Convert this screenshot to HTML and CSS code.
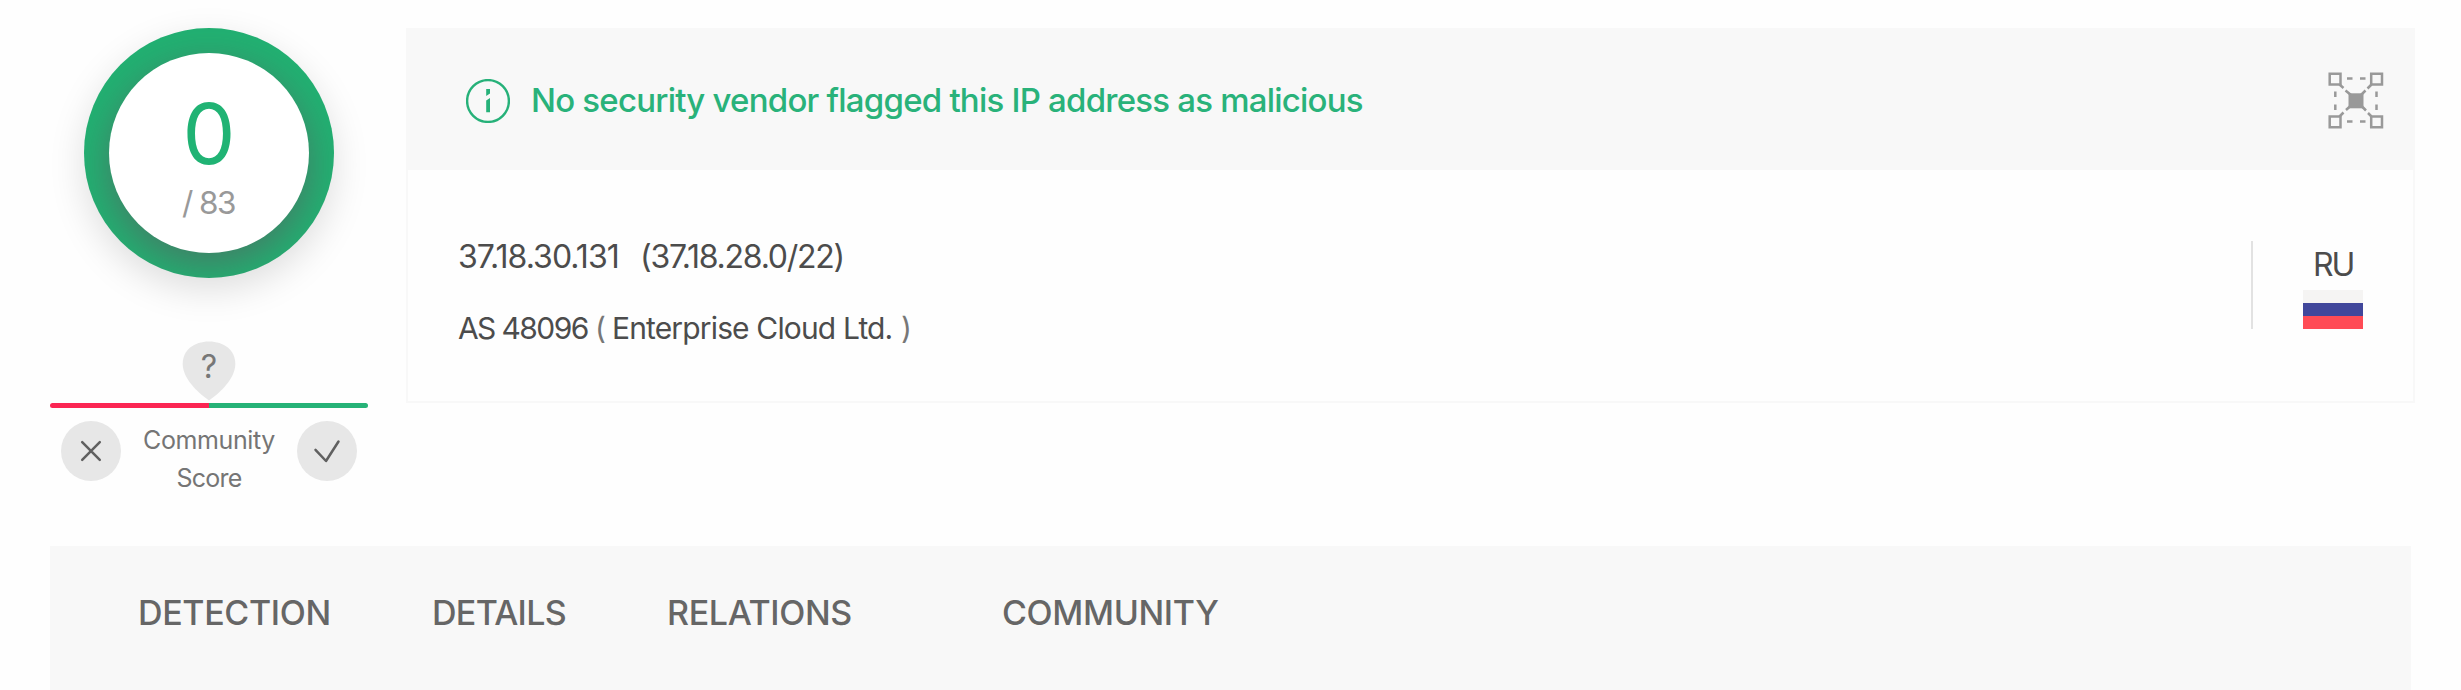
FILE: index.html
```html
<!DOCTYPE html>
<html lang="en">
<head>
<meta charset="utf-8">
<title>37.18.30.131</title>
<link rel="stylesheet" href="styles.css">
</head>
<body>
<div class="report">
  <div class="summary">
    <aside class="score">
      <div class="ring">
        <div class="dial">
          <span class="positives">0</span>
          <span class="total">/ 83</span>
        </div>
      </div>
      <div class="pin">
        <svg class="pin-shape" width="54" height="60" viewBox="0 0 54 60"><path d="M27 59.500C15 51 .700 37 .700 23C.700 9 12 .500 27 .500S53.300 9 53.300 23C53.300 37 39 51 27 59.500Z" fill="#e7e7e7"/></svg>
        <span class="pin-label">?</span>
      </div>
      <div class="bar"><div class="bar-bad"></div><div class="bar-good"></div></div>
      <div class="votes">
        <button class="vote"><svg width="60" height="60" viewBox="0 0 60 60"><path d="M21.200 21.200 38.800 38.800M38.800 21.200 21.200 38.800"/></svg></button>
        <div class="votes-label"><span class="community">Community</span><span class="word">Score</span></div>
        <button class="vote"><svg width="60" height="60" viewBox="0 0 60 60"><path d="M18.500 28.800 29 40 41.500 20.500"/></svg></button>
      </div>
    </aside>
    <section class="card">
      <header class="card-head">
        <svg class="info" width="44" height="44" viewBox="0 0 44 44"><circle cx="22" cy="22" r="20.900" fill="none" stroke="#26b179" stroke-width="2.400"/><path d="M20.200 10H24V14.500L20.200 17ZM20.200 21.500 24 19V33.200H20.200Z" fill="#26b179"/></svg>
        <h1 class="title">No security vendor flagged this IP address as malicious</h1>
        <svg class="graph" width="56" height="57" viewBox="0 0 56 57" fill="none" stroke="#999" stroke-width="2.500">
          <path d="M1.700 1.700h10.800v10.800H1.700zM43.200 1.700H54v10.800H43.200zM1.700 44.500h10.800v10.800H1.700zM43.200 44.500H54v10.800H43.200z"/>
          <path d="M19 6.500h5.500M32 6.500h5.500M19 49.500h5.500M32 49.500h5.500M7.300 19.500V25M7.300 32.500V38M48.500 19.500V25M48.500 32.500V38"/>
          <path d="M11.500 12.500 15.500 16M17.500 18.500 23 23M43.500 12.500 39.500 16.500M37.500 18.500 33 23M11.500 44.500 15.500 40.500M18 38 23 33.500M43.500 44.500 40 41M38 38.500 33 33.500"/>
          <rect x="20.500" y="21.300" width="15" height="15" fill="#999" stroke="none"/>
        </svg>
      </header>
      <div class="card-body">
        <div class="facts">
          <div class="fact-ip"><span class="ip">37.18.30.131</span><span class="range">(37.18.28.0/22)</span></div>
          <div class="fact-as"><span class="asn">AS 48096</span><span class="paren">(</span><span class="owner">Enterprise Cloud Ltd.</span><span class="paren">)</span></div>
        </div>
        <div class="country">
          <span class="country-code">RU</span>
          <div class="flag"><i class="white"></i><i class="blue"></i><i class="red"></i></div>
        </div>
      </div>
    </section>
  </div>
  <nav class="tabs">
    <a class="tab detection">DETECTION</a>
    <a class="tab details">DETAILS</a>
    <a class="tab relations">RELATIONS</a>
    <a class="tab comm">COMMUNITY</a>
  </nav>
</div>
</body>
</html>
```
FILE: styles.css
```css
* { box-sizing: border-box; }
body { margin: 0; background: #fefefe; font-family: Inter, "Liberation Sans", sans-serif; color: #4c4c4c; }
.report { height: 690px; padding: 28px 46px 0 50px; overflow: hidden; }
.summary { display: flex; gap: 38px; height: 518px; }
.score { width: 318px; display: flex; flex-direction: column; align-items: center; }
.ring { width: 250px; height: 250px; padding: 25px; border-radius: 50%; overflow: hidden; background: #21b172; box-shadow: 0 12px 36px rgba(0,0,0,.13); }
.dial { width: 200px; height: 200px; border-radius: 50%; background: #fff; box-shadow: 0 12px 38px rgba(105,70,90,.5); display: flex; flex-direction: column; align-items: center; padding-top: 31px; }
.positives { font-size: 84px; line-height: 100px; color: #20b374; font-weight: 400; }
.total { font-size: 31.5px; line-height: 37px; color: #999; white-space: nowrap; letter-spacing: -1.6px; margin-left: -1px; }
.pin { position: relative; width: 54px; height: 61px; margin-top: 63px; }
.pin-shape { display: block; }
.pin-label { position: absolute; inset: 0; text-align: center; line-height: 51px; font-size: 32px; color: #777; }
.bar { width: 318px; height: 5px; margin-top: 1px; border-radius: 3px; overflow: hidden; display: flex; }
.bar-bad { flex: 1; background: #fb2553; }
.bar-good { flex: 1; background: #26b277; }
.votes { width: 296px; margin-top: 13px; display: flex; justify-content: space-between; }
.vote { width: 60px; height: 60px; padding: 0; border: 0; border-radius: 50%; background: #e7e7e7; }
.vote svg { display: block; fill: none; stroke: #606060; stroke-width: 2.500; stroke-linecap: round; stroke-linejoin: round; }
.votes-label { display: flex; flex-direction: column; align-items: center; font-size: 25px; line-height: 38px; color: #757575; letter-spacing: -.4px; }
.word { letter-spacing: -.8px; }
.card { width: 2009px; height: 375px; border: 2px solid #f8f8f8; border-top: 0; }
.card-head { height: 142px; margin: 0 -2px; padding: 0 31px 0 60px; background: #f8f8f8; display: flex; align-items: center; }
.info { margin-top: 3px; }
.graph { margin-top: 2px; }
.title { margin: 1px auto 0 21px; font-size: 33px; line-height: 40px; font-weight: 500; color: #29b27a; white-space: nowrap; letter-spacing: -.78px; }
.card-body { display: flex; justify-content: space-between; padding-left: 50px; }
.facts { padding-top: 67px; }
.fact-ip, .fact-as { display: flex; line-height: 40px; white-space: nowrap; }
.fact-ip { font-size: 32px; letter-spacing: -.95px; }
.fact-as { font-size: 30px; margin-top: 31px; letter-spacing: -.85px; }
.ip { width: 182px; }
.range { letter-spacing: -1.25px; }
.asn { width: 137px; letter-spacing: -1.6px; }
.paren { color: #777; width: 17px; }
.owner { width: 289px; }
.country { width: 162px; height: 88px; margin-top: 71px; border-left: 2px solid #e2e2e2; padding: 4px 0 0 50px; }
.country-code { display: block; width: 60px; text-align: center; font-size: 32px; line-height: 40px; letter-spacing: -2.2px; }
.flag { width: 60px; height: 39px; margin-top: 5px; display: grid; grid-template-rows: 13px 13px 13px; }
.white { background: #f5f4f3; }
.blue { background: #41479b; }
.red { background: #ff4b55; }
.tabs { width: 2361px; height: 144px; background: #f8f8f8; display: flex; padding: 46px 0 0 88px; font-size: 34px; line-height: 41px; font-weight: 500; color: #666; white-space: nowrap; letter-spacing: -.35px; }
.detection { width: 294px; }
.details { width: 235px; letter-spacing: -.7px; }
.relations { width: 335px; }
```
